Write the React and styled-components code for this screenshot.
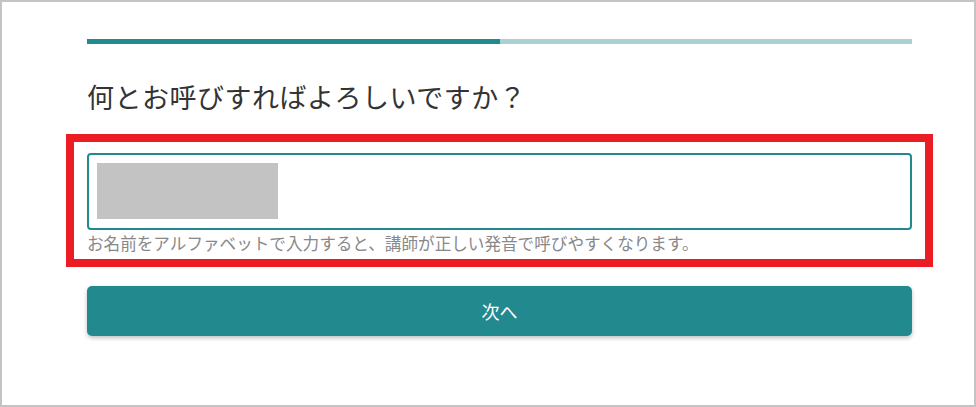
import React from "react";
import styled, { createGlobalStyle } from "styled-components";

const GlobalStyle = createGlobalStyle`
  html, body {
    margin: 0;
    padding: 0;
    background: #ffffff;
  }
  body {
    font-family: "Noto Sans CJK JP", "Noto Sans", sans-serif;
  }
`;

const Frame = styled.div`
  box-sizing: border-box;
  width: 976px;
  height: 407px;
  border: 2px solid #c4c4c4;
  background: #ffffff;
  padding: 37px 0 0 85px;
  display: flex;
  flex-direction: column;
  align-items: flex-start;
`;

const Column = styled.div`
  width: 825px;
  display: flex;
  flex-direction: column;
`;

const Progress = styled.div`
  height: 5px;
  background: #a9d0d3;
  display: flex;
`;

const ProgressFill = styled.div`
  height: 100%;
  background: #22898f;
`;

const Title = styled.h1`
  margin: 33px 0 0;
  font-size: 27px;
  line-height: 40px;
  letter-spacing: 0.5px;
  font-weight: 400;
  color: #333333;
`;

const Highlight = styled.div`
  margin: 17px -21px 0;
  border: 8px solid #ec1c24;
  padding: 11px 13px 6px;
`;

const Field = styled.div`
  box-sizing: border-box;
  height: 77px;
  border: 2px solid #22898f;
  border-radius: 4px;
  padding: 8px;
`;

const Masked = styled.div`
  width: 181px;
  height: 56px;
  background: #c3c3c3;
`;

const Hint = styled.p`
  margin: 3px 0 0;
  font-size: 16.6px;
  line-height: 20px;
  color: #888888;
  white-space: nowrap;
`;

const NextButton = styled.button`
  margin-top: 19px;
  height: 50px;
  border: none;
  border-radius: 5px;
  background: #22898f;
  color: #ffffff;
  font-family: inherit;
  font-size: 18px;
  box-shadow: 0 2px 4px rgba(0, 0, 0, 0.25);
  cursor: pointer;
`;

export default function App() {
  const progress = 50;
  return (
    <>
      <GlobalStyle />
      <Frame>
        <Column>
          <Progress>
            <ProgressFill style={{ width: `${progress}%` }} />
          </Progress>
          <Title>何とお呼びすればよろしいですか？</Title>
          <Highlight>
            <Field>
              <Masked />
            </Field>
            <Hint>
              お名前をアルファベットで入力すると、講師が正しい発音で呼びやすくなります。
            </Hint>
          </Highlight>
          <NextButton>次へ</NextButton>
        </Column>
      </Frame>
    </>
  );
}
